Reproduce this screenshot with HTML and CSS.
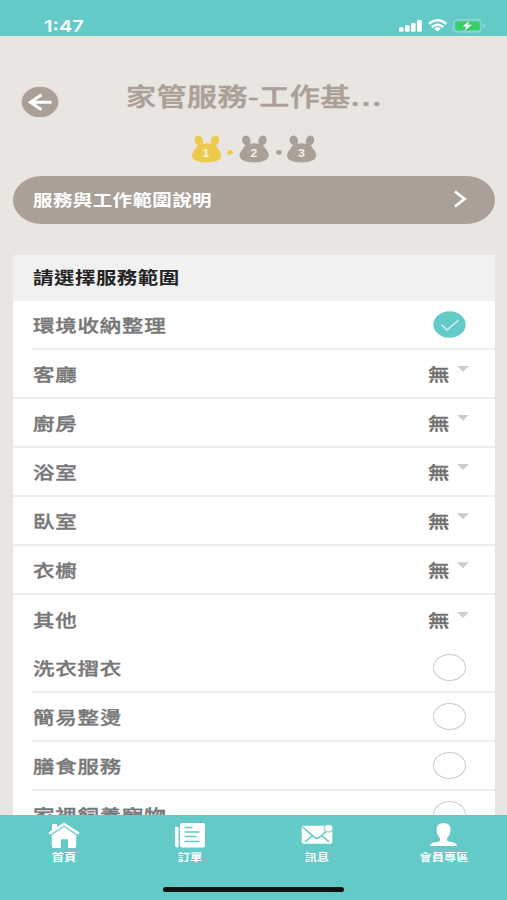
FILE: index.html
```html
<!DOCTYPE html>
<html lang="zh-Hant">
<head>
<meta charset="utf-8">
<title>家管服務</title>
<link rel="stylesheet" href="styles.css">
</head>
<body>
<div class="screen">
  <header class="status">
    <span class="time"><span class="wide">1:47</span></span>
    <svg class="signals" width="88" height="16" viewBox="0 0 88 16">
      <g fill="#fff">
        <rect x="0" y="10.300" width="4.600" height="4.500" rx="1.300"/>
        <rect x="6" y="8.300" width="4.600" height="6.500" rx="1.300"/>
        <rect x="12" y="6" width="4.600" height="8.800" rx="1.300"/>
        <rect x="18" y="3" width="4.800" height="11.800" rx="1.300"/>
        <path d="M35.300 11.400L38.600 14.400L41.900 11.400Q38.600 9.200 35.300 11.400Z"/>
      </g>
      <path d="M29.800 6.900Q38.600-.3 47.400 6.900M32.800 10Q38.600 5.400 44.400 10" fill="none" stroke="#fff" stroke-width="2.400"/>
      <rect x="54.700" y="2.900" width="27.500" height="12" rx="3.600" fill="none" stroke="#93dcd5" stroke-width="1.200"/>
      <path d="M84 7v4q2.200-.6 2.200-2t-2.200-2Z" fill="#93dcd5"/>
      <rect x="56.300" y="4.500" width="24.300" height="8.800" rx="2" fill="#35cf63"/>
      <path d="M70 3.900L63.500 9.600h3.800L65.500 14l7.300-6.200h-3.900Z" fill="#fff"/>
    </svg>
  </header>

  <main class="content">
    <div class="heading">
      <svg class="back" width="38" height="32" viewBox="0 0 38 32">
        <ellipse cx="19" cy="16" rx="18.300" ry="15.300" fill="#aaa097"/>
        <path d="M30.500 16.200H9.500M20.500 8.800L9.500 16.200L20.500 23.800" fill="none" stroke="#fff" stroke-width="3"/>
      </svg>
      <h1 class="title"><span class="wide">家管服務-工作基<span class="dots">...</span></span></h1>
    </div>

    <svg class="steps" width="126" height="28" viewBox="0 0 126 28">
      <defs>
        <g id="bear">
          <ellipse cx="7.800" cy="5.500" rx="4.100" ry="5" transform="rotate(-18 7.800 5.500)"/>
          <ellipse cx="24" cy="5.500" rx="4.100" ry="5" transform="rotate(18 24 5.500)"/>
          <path d="M11 8.800Q15.500 7.800 20.500 8.800Q25.500 9.500 27 14Q30.300 17 30.300 21Q29 27.400 15.500 27.400Q2 27.400 1 21Q1 17 4.500 14Q6 9.500 11 8.800Z"/>
        </g>
      </defs>
      <use href="#bear" x="0" fill="#edca4c"/>
      <use href="#bear" x="47.500" fill="#aaa097"/>
      <use href="#bear" x="95" fill="#aaa097"/>
      <ellipse cx="39" cy="17.300" rx="2.800" ry="2.400" fill="#edca4c"/>
      <ellipse cx="88" cy="17.300" rx="2.800" ry="2.400" fill="#aaa097"/>
      <g class="step-no">
        <text transform="translate(15 21.500) scale(1.250 1)">1</text>
        <text transform="translate(63 21.500) scale(1.250 1)">2</text>
        <text transform="translate(110.500 21.500) scale(1.250 1)">3</text>
      </g>
    </svg>

    <div class="banner">
      <span class="wide">服務與工作範圍說明</span>
      <svg width="14" height="18" viewBox="0 0 14 18"><path d="M1 1.500L10.500 9L1 16.500" fill="none" stroke="#fff" stroke-width="2.800"/></svg>
    </div>

    <section class="card">
      <h2 class="card-head"><span class="wide">請選擇服務範圍</span></h2>
      <div class="row item"><span class="wide">環境收納整理</span>
        <svg class="check" width="33" height="27" viewBox="0 0 33 27"><ellipse cx="16.500" cy="13.500" rx="16.200" ry="13.200" fill="#64cac8"/><path d="M8.500 13.800L14 19L25.500 9.200" fill="none" stroke="#d5f2f1" stroke-width="1.500"/></svg>
      </div>
      <div class="row sub"><span class="wide">客廳</span><span class="pick"><span class="wide">無</span><i class="caret"></i></span></div>
      <div class="row sub"><span class="wide">廚房</span><span class="pick"><span class="wide">無</span><i class="caret"></i></span></div>
      <div class="row sub"><span class="wide">浴室</span><span class="pick"><span class="wide">無</span><i class="caret"></i></span></div>
      <div class="row sub"><span class="wide">臥室</span><span class="pick"><span class="wide">無</span><i class="caret"></i></span></div>
      <div class="row sub"><span class="wide">衣櫥</span><span class="pick"><span class="wide">無</span><i class="caret"></i></span></div>
      <div class="row sub last"><span class="wide">其他</span><span class="pick"><span class="wide">無</span><i class="caret"></i></span></div>
      <div class="row item"><span class="wide">洗衣摺衣</span><i class="radio"></i></div>
      <div class="row item"><span class="wide">簡易整燙</span><i class="radio"></i></div>
      <div class="row item"><span class="wide">膳食服務</span><i class="radio"></i></div>
      <div class="row item"><span class="wide">家裡飼養寵物</span><i class="radio"></i></div>
    </section>
  </main>

  <nav class="tabs">
    <a class="tab">
      <svg class="house" width="32" height="28" viewBox="0 0 32 28">
        <path d="M4 3h5v4L4 10.500Z" fill="#fff"/>
        <path d="M3.800 14L16 5.600L28.200 14V25.500Q28.200 27 26.500 27H20V18.300H13V27H5.500Q3.800 27 3.800 25.500Z" fill="#fff"/>
        <path d="M1.500 14.500L16 5L30.500 14.500" fill="none" stroke="#64cac8" stroke-width="1.200"/>
        <path d="M1.200 12.700L16 3L30.800 12.700" fill="none" stroke="#fff" stroke-width="2.600"/>
      </svg>
      <span class="wide">首頁</span>
    </a>
    <a class="tab">
      <svg width="32" height="28" viewBox="0 0 32 28">
        <path d="M8 2H29.500Q31 2 31 3.500V24.500Q31 26.500 29 26.500H8Q6 26.500 6 24.500V3.500Q6 2 8 2Z" fill="#fff"/>
        <path d="M1 6H4.500V26.500Q1 26.500 1 24Z" fill="#fff"/>
        <path d="M10.500 6.500h8M10.500 11h15M10.500 15.500h12M10.500 20.500h15" stroke="#64cac8" stroke-width="1.400"/>
      </svg>
      <span class="wide">訂單</span>
    </a>
    <a class="tab">
      <svg width="32" height="28" viewBox="0 0 32 28">
        <rect x=".7" y="4.800" width="30.600" height="18" rx="1.800" fill="#fff"/>
        <path d="M1.500 6L13 15.800Q16 18.400 19 15.800L26 9.500M4 20.800L11.500 14.500M28 20.800L20.500 14.500" fill="none" stroke="#64cac8" stroke-width="1.600"/>
        <ellipse cx="27.500" cy="7.300" rx="4.400" ry="3.700" fill="#fff" stroke="#64cac8"/>
      </svg>
      <span class="wide">訊息</span>
    </a>
    <a class="tab">
      <svg width="32" height="28" viewBox="0 0 32 28">
        <path d="M15.500 2Q22.500 2 22.500 8.500Q22.300 14.500 19 17V19.500Q20 20.500 24 21.300Q29 22.300 29 25H2Q2 22.300 7 21.300Q11.500 20.500 12 19.500V17Q8.800 14.500 8.600 8.500Q8.600 2 15.500 2Z" fill="#fff"/>
      </svg>
      <span class="wide">會員專區</span>
    </a>
    <span class="home-bar"></span>
  </nav>
</div>
</body>
</html>
```
FILE: styles.css
```css
* { box-sizing: border-box; }
body {
  margin: 0;
  font-family: "Noto Sans CJK TC", sans-serif;
}
.screen {
  display: flex;
  flex-direction: column;
  width: 507px;
  height: 900px;
  overflow: hidden;
  background: #e9e5e1;
}
.wide {
  display: inline-block;
  white-space: nowrap;
  transform: scaleX(1.22);
  transform-origin: left center;
}
.status {
  flex: none;
  display: flex;
  justify-content: space-between;
  height: 36px;
  padding: 17px 20px 0 44px;
  background: #64cac8;
}
.time {
  font: 600 16.5px/18px Inter, sans-serif;
  color: #fff;
}
.content {
  flex: 1;
  min-height: 0;
  overflow: hidden;
  padding: 0 12px 0 13px;
}
.heading {
  display: flex;
  height: 99px;
  padding: 50px 0 0 8px;
}
.title {
  margin: -9px 0 0 67px;
  font-size: 24.600px;
  line-height: 36px;
  font-weight: 500;
  letter-spacing: .4px;
  color: #aaa097;
  -webkit-text-stroke: .5px #aaa097;
}
.dots { letter-spacing: 1.500px; }
.steps {
  display: block;
  margin: 0 0 13px 178px;
}
.step-no {
  font: 700 10px "Liberation Sans", sans-serif;
  text-anchor: middle;
  fill: #f5f1ea;
}
.banner {
  display: flex;
  align-items: center;
  justify-content: space-between;
  height: 48px;
  padding: 0 27px 2px 20px;
  border-radius: 29px / 24px;
  background: #aaa097;
  color: #fff;
  font-size: 16px;
  letter-spacing: .3px;
  font-weight: 700;
}
.card {
  margin-top: 31px;
  background: #fff;
}
.card-head {
  display: flex;
  align-items: center;
  height: 45.500px;
  margin: 0;
  padding: 0 0 1px 20px;
  background: #f1f1f1;
  color: #222;
  font-size: 16.800px;
  letter-spacing: .4px;
  font-weight: 700;
}
.row {
  display: flex;
  align-items: center;
  justify-content: space-between;
  height: 49.150px;
  border-bottom: 2px solid #eee;
  color: #777;
  font-size: 17.600px;
  letter-spacing: .65px;
  font-weight: 500;
  -webkit-text-stroke: .35px #777;
}
.item {
  margin-left: 19px;
  padding: 0 29px 0 1px;
}
.sub { padding: 0 25px 0 20px; }
.last {
  height: 48.200px;
  border-bottom: 0;
}
.pick {
  display: flex;
  width: 42px;
  justify-content: space-between;
  color: #6c6c6c;
}
.caret {
  width: 12px;
  height: 6px;
  margin: 5px 1px 0 0;
  background: #ccc;
  clip-path: polygon(0 0, 100% 0, 50% 100%);
}
.radio {
  width: 33px;
  height: 27px;
  border: 1.500px solid #ccc;
  border-radius: 50%;
}
.tabs {
  position: relative;
  flex: none;
  display: grid;
  grid-template-columns: repeat(4, 1fr);
  height: 85px;
  padding-top: 6px;
  background: #64cac8;
}
.tab {
  display: flex;
  flex-direction: column;
  align-items: center;
  color: #fff;
  font-size: 10px;
  line-height: 14px;
  font-weight: 700;
}
.tab .wide {
  margin-top: 1px;
  transform-origin: center;
}
.tab:first-child { padding-left: 2px; }
.home-bar {
  position: absolute;
  left: 163px;
  bottom: 8px;
  width: 181px;
  height: 5px;
  border-radius: 3px;
  background: #111;
}
```
